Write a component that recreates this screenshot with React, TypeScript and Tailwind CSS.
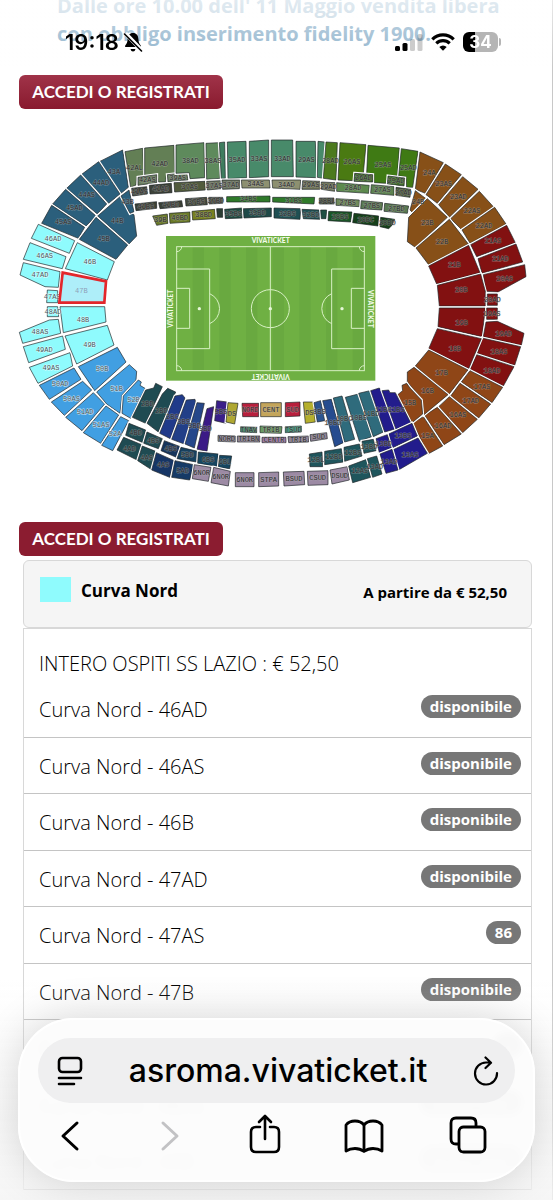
type Block = [label: string, fill: string, points: string];

interface Stand {
  x: number;
  y: number;
  blocks: Block[];
}

const AQUA = "#8ffbfd";
const PETROL = "#2b5f7c";
const SKY = "#419fe2";
const BROWN = "#875018";
const RUST = "#8f4617";
const RED = "#821111";
const NAVY = "#221c8c";
const MAUVE = "#9c8aa4";

const stands: Stand[] = [
  {
    // curva nord, upper half
    x: 30,
    y: 0,
    blocks: [
      ["43A", PETROL, "268,95 338,60 355,172 333,190"],
      ["44AD", PETROL, "215,133 266,95 330,192 296,220"],
      ["44AS", PETROL, "170,175 212,135 290,222 262,252"],
      ["45AD", PETROL, "128,222 167,178 258,258 228,288"],
      ["45AS", PETROL, "95,280 125,226 224,292 205,325"],
      ["44B", PETROL, "263,258 330,200 358,246 372,254 380,318 357,342"],
      ["43B", PETROL, "333,198 357,180 372,245 360,250"],
      ["45B", PETROL, "258,262 353,345 318,388 208,328"],
      ["46AD", AQUA, "85,283 194,332 178,370 64,325"],
      ["46AS", AQUA, "60,338 168,380 157,416 40,388"],
      ["46B", AQUA, "202,338 313,395 292,450 166,416"],
      ["47AD", AQUA, "40,398 150,425 145,472 105,470 30,435"],
      ["47AS", AQUA, "112,480 143,482 143,518 110,518"],
      ["42AL", "#637f55", "345,65 398,55 402,138 380,142 378,165 362,172"],
      ["42AD", "#637f55", "404,54 492,46 494,130 470,134 466,156 446,156 440,134 404,138"],
      ["42AS", "#6a7f60", "384,142 440,134 440,158 384,166"],
      ["39AS", "#6a7f60", "472,134 530,128 534,150 474,156"],
      ["41AS", "#3d4238", "365,175 410,170 412,192 368,198"],
      ["41AD", "#3d4238", "418,166 484,160 486,188 420,192"],
      ["41BS", "#3b4136", "375,222 440,215 440,235 378,242"],
      ["41BD", "#3b4136", "446,218 515,212 518,230 450,236"],
      ["39B", "#6b7a28", "428,258 472,252 474,280 440,286"],
      ["40BD", "#6b7a28", "478,250 540,246 540,276 480,280"],
    ],
  },
  {
    // curva nord, lower half
    x: 30,
    y: 510,
    blocks: [
      ["48AD", AQUA, "112,20 143,20 146,50 112,50"],
      ["48B", AQUA, "150,20 284,20 288,66 160,98"],
      ["48AS", AQUA, "28,97 118,60 145,58 152,100 38,130"],
      ["49AD", AQUA, "40,140 158,108 166,148 56,188"],
      ["49AS", AQUA, "58,202 180,158 188,198 84,250"],
      ["49B", AQUA, "165,108 292,76 312,135 200,192"],
      ["50AD", SKY, "88,256 192,204 213,238 118,298"],
      ["50B", SKY, "205,200 322,142 348,186 254,272"],
      ["50AS", SKY, "124,306 218,244 245,270 163,346"],
      ["51AD", SKY, "167,352 250,278 284,312 216,392"],
      ["51B", SKY, "260,276 358,194 380,214 378,240 336,285 330,340 290,312"],
      ["51AS", SKY, "220,398 288,318 326,345 272,430"],
      ["52B", SKY, "340,288 385,240 394,246 390,256 405,265 362,355 336,340"],
      ["52A", SKY, "275,436 332,350 356,362 308,452"],
    ],
  },
  {
    // tribuna tevere
    x: 540,
    y: 0,
    blocks: [
      ["38AD", "#5e8a5c", "-12,45 72,38 74,143 30,146 28,128 -12,130"],
      ["38AS", "#5e8a5c", "78,40 116,38 120,145 80,148"],
      ["", "#3f7d5f", "118,38 134,36 136,145 124,146"],
      ["35AD", "#488a6a", "142,36 198,34 200,143 144,146"],
      ["33AS", "#488a6a", "208,34 266,30 266,140 208,143"],
      ["33AD", "#488a6a", "274,30 338,30 340,140 274,140"],
      ["29AS", "#488a6a", "348,34 406,34 410,143 348,141"],
      ["", "#488a6a", "414,34 434,36 430,145 412,142"],
      ["28AD", "#4c7a1e", "438,36 472,38 468,150 430,145"],
      ["26AS", "#4a7a12", "480,38 558,44 550,130 524,130 522,152 474,150"],
      ["37AS", "#515b3c", "-18,158 75,154 76,180 -16,186"],
      ["37AS", "#6c7560", "80,154 122,152 124,176 82,180"],
      ["37AD", "#6c7560", "126,150 180,150 178,176 128,178"],
      ["34AS", "#8d9070", "184,150 268,150 270,174 186,174"],
      ["34AD", "#8d9070", "276,150 362,150 360,178 278,174"],
      ["29AS", "#6f7558", "368,152 420,154 420,178 366,178"],
      ["29AD", "#6f7558", "424,156 466,158 464,184 424,178"],
      ["28AD", "#5d8a4e", "470,158 568,166 566,190 470,184"],
      ["37BD", "#444a3c", "86,202 128,202 128,220 86,222"],
      ["37BS", "#444a3c", "16,206 80,202 82,224 18,228"],
      ["34BS", "#2f7a2a", "140,200 270,198 270,216 140,216"],
      ["31BS", "#2f7a2a", "278,202 404,202 402,222 278,216"],
      ["28BL", "#3d4a35", "418,204 462,204 464,222 418,222"],
      ["27BS", "#6f8a5a", "468,206 538,210 538,230 468,226"],
      ["38BD", "#77801e", "36,244 104,238 106,266 38,270"],
      ["", "#2b3d33", "110,236 128,236 128,262 112,262"],
      ["35BS", "#1f4a40", "134,238 186,234 188,264 136,266"],
      ["35BD", "#1f4a48", "190,236 274,234 274,260 192,264"],
      ["32BS", "#1f4f52", "282,234 362,236 360,268 282,264"],
      ["32BD", "#1f4f52", "366,238 418,240 420,268 370,266"],
      ["", "#1f4f42", "422,240 440,240 438,266 424,266"],
      ["28BS", "#1a5426", "446,244 516,246 512,276 444,272"],
    ],
  },
  {
    // curva sud, upper half
    x: 1080,
    y: 0,
    blocks: [
      ["25AS", "#3f7a14", "24,46 118,54 112,138 84,136 78,160 42,158 42,132 20,130"],
      ["25AD", "#3f7a14", "124,56 174,64 158,172 140,172 138,140 116,138"],
      ["26AD", "#3f6a2a", "-16,130 38,134 38,156 -18,154"],
      ["25AD", "#3f6a2a", "84,138 134,144 132,168 82,162"],
      ["27AS", "#5d8250", "34,164 102,170 102,196 32,190"],
      ["27AD", "#4b5a3c", "108,172 152,178 150,202 108,196"],
      ["27BS", "#5a7a52", "4,212 68,218 66,240 2,236"],
      ["27BD", "#5a7a52", "74,220 146,228 142,250 72,244"],
      ["28BC", "#16401a", "-18,250 56,258 54,288 -22,278"],
      ["28BD", "#16401a", "62,262 104,268 96,286 86,296 60,290"],
      ["24A", BROWN, "180,66 250,98 196,190 166,178"],
      ["23AS", BROWN, "256,102 304,134 232,220 198,194"],
      ["23AD", BROWN, "308,140 354,178 268,262 236,224"],
      ["22AS", BROWN, "358,184 400,230 304,298 272,266"],
      ["22AD", BROWN, "404,232 438,282 330,340 306,300"],
      ["24B", BROWN, "166,182 198,206 160,250 150,240"],
      ["23B", BROWN, "202,206 262,262 166,352 142,335 146,262"],
      ["22B", BROWN, "268,268 325,342 206,404 168,354"],
      ["21AS", RED, "440,286 466,338 350,380 332,344"],
      ["21AD", RED, "468,342 488,396 366,430 354,386"],
      ["20AS", RED, "370,434 494,404 498,440 414,486 378,484"],
      ["21B", RED, "206,408 326,346 360,428 230,462"],
      ["20B", RED, "232,466 362,432 376,484 376,528 238,528"],
      ["20AD", RED, "382,492 412,492 412,526 382,526"],
    ],
  },
  {
    // curva sud, lower half
    x: 1080,
    y: 510,
    blocks: [
      ["19B", RED, "238,24 376,24 366,110 234,80"],
      ["19AS", RED, "380,24 412,24 412,58 380,58"],
      ["19AD", RED, "378,66 412,64 492,100 484,136 370,110"],
      ["18AS", RED, "366,114 482,140 464,196 352,160"],
      ["18AD", RED, "350,164 462,200 430,258 330,208"],
      ["18B", RED, "232,86 364,116 326,206 206,146"],
      ["17B", RUST, "206,150 324,210 266,284 166,198"],
      ["17AS", RUST, "330,212 428,262 396,308 304,246"],
      ["17AD", RUST, "300,250 392,312 356,354 272,288"],
      ["16AS", RUST, "268,290 352,358 308,398 236,320"],
      ["16AD", RUST, "232,322 304,402 252,434 194,346"],
      ["15A", RUST, "190,350 248,438 204,462 158,368"],
      ["16B", RUST, "162,202 264,284 192,344 186,298 142,246 142,216"],
      ["15B", RUST, "112,285 128,272 126,256 140,250 150,264 184,300 188,342 156,368"],
    ],
  },
  {
    // monte mario, left corner
    x: 375,
    y: 720,
    blocks: [
      ["2BD", "#1f4b52", "22,142 62,60 86,54 92,40 112,50 62,160"],
      ["2BD", "#1f4b52", "66,160 112,72 128,55 152,66 100,186"],
      ["2BC", "#203a8a", "104,190 150,78 172,74 180,84 136,206"],
      ["3BS", "#223f88", "140,208 184,90 210,88 212,98 178,222"],
      ["5BD", "#26478a", "180,222 216,98 238,100 208,234"],
      ["5BD", "#3b1a86", "216,238 246,116 266,110 246,244"],
      ["4BD", "#1f4b52", "12,160 62,180 54,218 2,196"],
      ["4BS", "#1f4b52", "66,186 112,206 100,236 56,220"],
      ["4BS", "#16355c", "118,212 166,230 154,262 108,242"],
      ["5BD", "#16405f", "168,232 218,244 214,276 156,266"],
      ["6BS", "#164660", "220,246 280,252 276,290 218,280"],
      ["6BL", "#164660", "284,256 320,258 314,296 280,292"],
      ["4AD", "#1f4b52", "-4,202 50,224 36,270 -24,240"],
      ["4AS", "#1f4b52", "52,228 92,244 78,298 38,272"],
      ["4AS", "#163565", "94,248 148,272 134,322 80,300"],
      ["5AD", "#163a66", "150,272 206,284 194,330 140,322"],
      ["6NOR", MAUVE, "208,284 258,292 250,334 202,326"],
      ["6NOR", MAUVE, "266,292 316,304 310,348 258,338"],
    ],
  },
  {
    // monte mario, centre
    x: 540,
    y: 750,
    blocks: [
      ["5BS", "#3a1f88", "110,62 142,66 138,130 104,122"],
      ["DS", "#b0a832", "144,68 174,70 164,132 138,126"],
      ["NORD", "#b81f3c", "186,70 236,70 236,110 188,110"],
      ["CENT", "#c4a55a", "242,68 304,68 304,110 242,110"],
      ["SUD", "#b81f3c", "316,68 360,66 360,108 316,110"],
      ["TNAV", "#3d8a66", "182,140 230,142 230,158 182,156"],
      ["TRIB", "#6b9a63", "240,138 306,140 304,160 240,158"],
      ["TSUD", "#2f9a76", "316,140 364,138 364,156 316,158"],
      ["NORD", "#8f8296", "114,166 166,168 166,186 114,184"],
      ["TRIBN", "#8f8296", "172,168 240,168 240,186 172,186"],
      ["CENTR", "#a077a5", "246,172 318,172 318,188 246,188"],
      ["TRIB", "#8f8296", "324,170 386,168 386,186 326,188"],
      ["SUD", "#8f8296", "390,164 440,158 442,176 392,184"],
      ["6NOR", MAUVE, "166,278 222,278 222,320 166,320"],
      ["STPA", MAUVE, "236,278 296,276 296,318 236,320"],
      ["BSUD", MAUVE, "310,276 372,274 374,314 312,318"],
      ["CSUD", MAUVE, "382,274 444,272 444,314 384,316"],
      ["DSUD", MAUVE, "450,270 502,260 508,300 456,312"],
    ],
  },
  {
    // monte mario, right corner
    x: 870,
    y: 720,
    blocks: [
      ["DS", "#b5b02e", "40,96 70,96 76,156 46,160"],
      ["8BS", "#2c5590", "72,98 92,92 104,152 82,156"],
      ["10BD", "#264c8f", "98,92 124,88 160,218 134,230"],
      ["10BC", "#2f6b7c", "130,84 156,78 194,208 164,216"],
      ["10BS", "#2f6b7c", "166,82 205,72 245,200 208,214"],
      ["11BD", "#2f6b7c", "206,70 240,62 280,186 250,200"],
      ["11BC", NAVY, "242,62 268,54 276,68 318,176 284,186"],
      ["11BS", NAVY, "276,62 296,60 300,68 316,68 362,158 318,178"],
      ["13BS", NAVY, "296,192 366,160 382,198 306,234"],
      ["13BD", NAVY, "258,206 292,194 304,234 268,248"],
      ["13AS", NAVY, "308,240 384,204 412,250 322,302"],
      ["13AD", NAVY, "270,252 306,238 324,300 288,310"],
      ["12BL", "#1f555c", "58,252 96,246 98,290 60,290"],
      ["12BD", "#1f555c", "104,244 154,236 160,276 104,284"],
      ["12BS", "#1f555c", "162,232 208,222 216,258 164,274"],
      ["13BD", "#1f555c", "216,214 250,208 258,242 222,250"],
      ["12AS", "#1f555c", "176,288 230,268 242,322 188,338"],
      ["13AD", "#1f555c", "232,266 260,258 276,312 248,322"],
    ],
  },
];

const sectors = [
  { name: "Curva Nord - 46AD", badge: "disponibile" },
  { name: "Curva Nord - 46AS", badge: "disponibile" },
  { name: "Curva Nord - 46B", badge: "disponibile" },
  { name: "Curva Nord - 47AD", badge: "disponibile" },
  { name: "Curva Nord - 47AS", badge: "86" },
  { name: "Curva Nord - 47B", badge: "disponibile" },
  { name: "Curva Nord - 48AD", badge: "8" },
  { name: "Curva Nord - 48AS", badge: "disponibile" },
  { name: "Curva Nord - 48B", badge: "disponibile" },
];

const center = (points: string) => {
  const pairs = points.split(" ").map((pair) => pair.split(",").map(Number));
  const xs = pairs.map((pair) => pair[0]);
  const ys = pairs.map((pair) => pair[1]);
  return {
    x: (Math.min(...xs) + Math.max(...xs)) / 2,
    y: (Math.min(...ys) + Math.max(...ys)) / 2,
  };
};

const BlockLabel = ({ block }: { block: Block }) => {
  const [label, fill, points] = block;
  const { x, y } = center(points);
  const bright = fill === AQUA || fill === SKY;

  return (
    <text
      x={x}
      y={y + 7}
      textAnchor="middle"
      fontSize="21"
      fill={bright ? "#46555c" : "#2a2a2a"}
      stroke={bright ? "#ffffff" : "#b4b4b4"}
      strokeOpacity={bright ? 0.7 : 0.5}
      strokeWidth="3"
      paintOrder="stroke"
    >
      {label}
    </text>
  );
};

const Pitch = () => (
  <g transform="translate(450 285)">
    <rect x="48" y="33" width="628" height="434" fill="#6fb043" />
    {[128, 208, 288, 368, 448, 528, 608].map((x) => (
      <rect key={x} x={x} y="65" width="34" height="372" fill="#69a940" />
    ))}
    <g fill="none" stroke="#d8f0c4" strokeWidth="3">
      <rect x="80" y="65" width="563" height="372" />
      <path d="M361 65V437M80 132H179V371H80M80 190H119V310H80M643 132H545V371H643M643 190H604V310H643" />
      <circle cx="361" cy="251" r="57" />
      <path d="M179 206A49 49 0 0 1 179 296M545 206A49 49 0 0 0 545 296" />
      <path d="M95 65A15 15 0 0 1 80 80M628 65A15 15 0 0 0 643 80M80 422A15 15 0 0 1 95 437M643 422A15 15 0 0 0 628 437" />
    </g>
    <g fill="#e6f6d8">
      <circle cx="148" cy="251" r="5" />
      <circle cx="361" cy="251" r="5" />
      <circle cx="576" cy="251" r="5" />
    </g>
    <g fill="#f2fbe9" fontFamily="Lato, sans-serif" fontWeight="900" fontSize="20" textAnchor="middle">
      <text x="362" y="55">VIVATICKET</text>
      <text transform="translate(362 446) rotate(180)">VIVATICKET</text>
      <text transform="translate(70 251) rotate(-90)">VIVATICKET</text>
      <text transform="translate(654 251) rotate(90)">VIVATICKET</text>
    </g>
  </g>
);

const StadiumMap = () => (
  <svg
    viewBox="0 0 1659 1080"
    className="block w-full"
    fontFamily="'Liberation Mono', monospace"
    role="img"
    aria-label="Stadio"
  >
    {stands.map((stand) => (
      <g key={`${stand.x}-${stand.y}`} transform={`translate(${stand.x} ${stand.y})`}>
        {stand.blocks.map(([, fill, points]) => (
          <g key={points}>
            {/* white outline keeps an aisle between neighbours */}
            <polygon points={points} fill="none" stroke="#ffffff" strokeWidth="9" />
            <polygon points={points} fill={fill} stroke="#1d2226" strokeWidth="2" />
          </g>
        ))}
        {stand.blocks.map((block) => (
          <BlockLabel key={block[2]} block={block} />
        ))}
      </g>
    ))}
    <Pitch />
    {/* selected block */}
    <g transform="translate(30 0)">
      <polygon points="158,428 288,454 283,518 148,518" fill="#aeeef9" stroke="#e3262b" strokeWidth="8" />
      <text x="214" y="488" textAnchor="middle" fontSize="21" fill="#8f9fb8">
        47B
      </text>
    </g>
  </svg>
);

const LoginButton = ({ className }: { className: string }) => (
  <button
    className={`ml-[19px] flex h-[34px] w-[204px] items-center justify-center rounded-md font-[Lato] text-[17px] font-bold whitespace-nowrap text-white ${className}`}
  >
    ACCEDI O REGISTRATI
  </button>
);

const StatusBar = () => (
  <div className="fixed inset-x-0 top-0 z-20 flex items-center justify-between bg-linear-to-b from-white/60 to-transparent pt-7 pr-[52px] pb-3 pl-[65px] text-black">
    <div className="flex items-center gap-1">
      <span className="font-[Inter] text-[22px] leading-7 font-semibold">19:18</span>
      <svg width="20" height="20" viewBox="0 0 20 20" aria-hidden="true">
        <path d="M10 1C6.500 1 4.800 3.500 4.600 7C4.400 10.500 3.800 11.500 2.400 13.200C1.700 14.200 2 15 3 15H17C18 15 18.300 14.200 17.600 13.200C16.200 11.500 15.600 10.500 15.400 7C15.200 3.500 13.500 1 10 1Z" />
        <path d="M7.500 17H12.500Q12 19.500 10 19.500Q8 19.500 7.500 17Z" />
        <path d="M2.500 1.500L19 18.500" stroke="#ffffff" strokeWidth="4" />
        <path d="M1.500 2L18.500 19" stroke="#000000" strokeWidth="1.600" strokeLinecap="round" />
      </svg>
    </div>
    <div className="flex items-center gap-2">
      <svg width="28" height="18" viewBox="0 0 28 18" aria-hidden="true">
        <rect x="0" y="13" width="5" height="5" rx="1.500" />
        <rect x="7.500" y="10" width="5" height="8" rx="1.500" />
        <rect x="15" y="6" width="5" height="12" rx="1.500" opacity="0.2" />
        <rect x="22.500" y="1" width="5" height="17" rx="1.500" opacity="0.2" />
      </svg>
      <svg width="24" height="18" viewBox="0 0 24 18" fill="none" stroke="black" strokeWidth="3.200" aria-hidden="true">
        <path d="M1.300 6.300A15.300 15.300 0 0 1 22.700 6.300" />
        <path d="M5.300 10.400A9.700 9.700 0 0 1 18.700 10.400" />
        <path d="M12 17.800L8.300 14A5.300 5.300 0 0 1 15.700 14Z" fill="black" stroke="none" />
      </svg>
      <div className="flex items-center gap-px">
        <div className="flex h-5 w-[35px] items-center justify-center rounded-md bg-linear-to-r from-black from-34% to-[#b5b5b5] to-34% font-[Inter] text-[17px] leading-5 font-bold text-white">
          34
        </div>
        <div className="h-2 w-0.5 rounded-r-full bg-[#b5b5b5]" />
      </div>
    </div>
  </div>
);

const BrowserBar = () => (
  <nav className="fixed inset-x-[18px] bottom-[18px] z-20 rounded-[56px] border-2 border-white bg-[#fcfcfc]/95 px-[18px] pt-[18px] pb-[26px] text-black shadow-[0_0_44px_rgba(0,0,0,0.16)] backdrop-blur-xs">
    <div className="flex h-[65px] items-center justify-between rounded-full bg-[#efeff0] pr-4 pl-[19px]">
      <button aria-label="Menu pagina">
        <svg width="26" height="30" viewBox="0 0 26 30" fill="none" stroke="currentColor" strokeWidth="2.600" strokeLinecap="round">
          <rect x="2" y="2" width="22" height="14" rx="3.500" />
          <path d="M2 22H24M2 28H17" />
        </svg>
      </button>
      <span className="font-[Inter] text-[32px] leading-10 font-medium">asroma.vivaticket.it</span>
      <button aria-label="Ricarica">
        <svg width="26" height="30" viewBox="0 0 26 30" fill="none" stroke="currentColor" strokeWidth="2.200" strokeLinecap="round" strokeLinejoin="round">
          <path d="M24 17A11 11 0 1 1 13 6.500H17.500M12.500 1.500L18 6.700L12.500 12" />
        </svg>
      </button>
    </div>
    <div className="-mx-[18px] grid h-[51px] grid-cols-[100fr_100fr_90fr_108fr_99fr] items-end justify-items-center pr-4">
      <button aria-label="Indietro">
        <svg width="20" height="36" viewBox="0 0 20 36" fill="none" stroke="currentColor" strokeWidth="3" strokeLinecap="round" strokeLinejoin="round">
          <path d="M17 5L3 18L17 31" />
        </svg>
      </button>
      <button aria-label="Avanti" className="text-[#c2c2c4]" disabled>
        <svg width="20" height="36" viewBox="0 0 20 36" fill="none" stroke="currentColor" strokeWidth="3" strokeLinecap="round" strokeLinejoin="round">
          <path d="M3 5L17 18L3 31" />
        </svg>
      </button>
      <button aria-label="Condividi">
        <svg width="32" height="40" viewBox="0 0 32 40" fill="none" stroke="currentColor" strokeWidth="2.600" strokeLinecap="round" strokeLinejoin="round">
          <path d="M11 13H7Q2 13 2 18V33Q2 38 7 38H25Q30 38 30 33V18Q30 13 25 13H21" />
          <path d="M16 25V2M10 8L16 2L22 8" />
        </svg>
      </button>
      <button aria-label="Preferiti">
        <svg width="40" height="36" viewBox="0 0 40 36" fill="none" stroke="currentColor" strokeWidth="2.800" strokeLinejoin="round">
          <path d="M20 7Q17 3 11 3Q5 3 2 7V33Q6 30.500 11 30.500Q16 30.500 20 33.500Q24 30.500 29 30.500Q34 30.500 38 33V7Q35 3 29 3Q23 3 20 7Z" />
          <path d="M20 7V33" />
        </svg>
      </button>
      <button aria-label="Pannelli">
        <svg width="38" height="38" viewBox="0 0 38 38" fill="none" stroke="currentColor" strokeWidth="2.800" strokeLinejoin="round">
          <rect x="10" y="11" width="26" height="25" rx="4.500" />
          <path d="M10 28H7Q2 28 2 23V7Q2 2 7 2H22Q27 2 27 7V11" />
        </svg>
      </button>
    </div>
  </nav>
);

export default function App() {
  return (
    <div className="h-screen overflow-hidden border-r border-[#c8c8c8] bg-white font-['Open_Sans',sans-serif] text-black">
      <p className="-mt-2 pr-10 pl-[57px] text-[20px] leading-7 font-bold text-[#86adc8]">
        <span className="opacity-60">Dalle ore 10.00 dell' 11 Maggio vendita libera</span>
        <br />
        con obbligo inserimento fidelity 1900.
      </p>

      <LoginButton className="mt-[27px] bg-linear-to-b from-[#a03349] to-[#89192e]" />
      <div className="mt-[21px] -mr-px">
        <StadiumMap />
      </div>
      <LoginButton className="mt-8 bg-[#8b1c30]" />

      <section className="mt-1 mr-5 ml-[23px]">
        <header className="flex h-[68px] items-start rounded-md border border-[#d8d8d8] bg-[#f5f5f5] pt-4 pr-6 pl-4">
          <span className="mr-[10px] h-[25px] w-[31px] bg-[#8ffbfd]" />
          <h2 className="grow text-[17px] leading-7 font-bold">Curva Nord</h2>
          <span className="text-[15px] leading-[30px] font-bold">A partire da € 52,50</span>
        </header>
        <div className="border-x border-t border-[#d8d8d8]">
          <p className="px-[15px] pt-[19px] pb-px text-[20px] leading-8 font-light">INTERO OSPITI SS LAZIO : € 52,50</p>
          <ul className="grid min-h-[509px] auto-rows-fr">
            {sectors.map((sector) => (
              <li
                key={sector.name}
                className="flex items-start justify-between border-b border-[#c4c4c4] pt-[14px] pr-[10px] pl-[15px]"
              >
                <span className="text-[20px] leading-[30px] font-light">{sector.name}</span>
                <span className="flex h-[23px] items-center rounded-full bg-[#777777] px-[9px] text-[15px] font-bold text-white">
                  {sector.badge}
                </span>
              </li>
            ))}
          </ul>
        </div>
      </section>

      <div className="pointer-events-none fixed inset-x-0 bottom-0 z-10 h-56 bg-linear-to-b from-transparent to-[#f4f4f4]/80" />
      <StatusBar />
      <BrowserBar />
    </div>
  );
}
